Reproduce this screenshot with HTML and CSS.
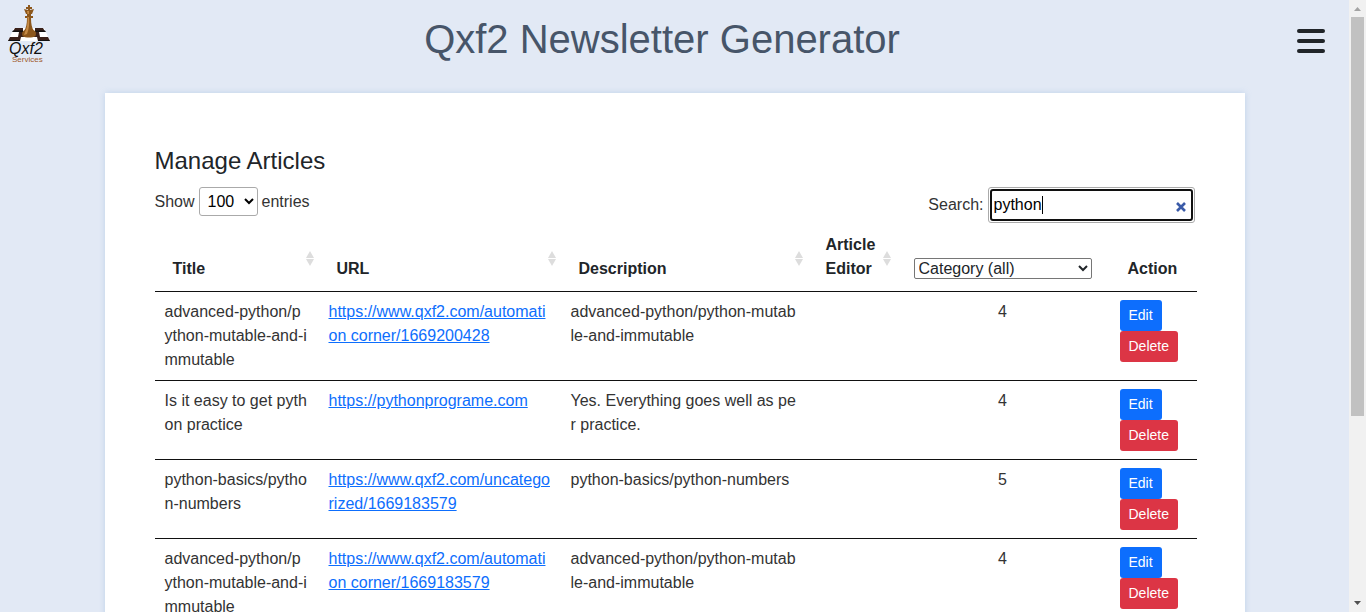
FILE: index.html
```html
<!DOCTYPE html>
<html lang="en">
<head>
<meta charset="utf-8">
<title>Qxf2 Newsletter Generator</title>
<meta name="viewport" content="width=device-width, initial-scale=1">
<link rel="stylesheet" href="styles.css">
</head>
<body class="window">
<div class="page">
  <header class="topbar">
    <a class="logo" href="#" aria-label="Qxf2 Services">
      <svg viewBox="0 0 44 66" width="44" height="66" aria-hidden="true">
        <path d="M7 28H37L43 41H1z" fill="#fff"/>
        <path d="M8 28h8v3.500H6zM28 28h8l2 3.500H28zM12 32h20l1 5H11zM3 37h11l-1 4H1zM30 37h11l2 4H31z" fill="#3a211a"/>
        <path d="M6 30.500h10v1.500H5zM28 30.500h10l1 1.500H28zM2 40h11v1H1zM31 40h11l1 1H31z" fill="#111"/>
        <path d="M21 5h2v2h2v2h-2v1l4-1-2 5h-1v2h2v2h-2c0 6 1 10 2.500 12 2.500 1 3 3 2 6-3 2-10 2-13 0-1-3 0-5 2-6 1.500-2 2.500-6 2.500-12h-2v-2h2v-2h-1l-2-5 4 1V9h-2V7h2z" fill="#8c571c"/>
        <path d="M20.500 17c.5 6-.5 11-2.500 15l-1 3 3-1c2-5 2.500-10 2-17zM20 11h2v3h-1.500z" fill="#c58a45"/>
        <text class="logo-name" x="2" y="54">Qxf2</text>
        <text class="logo-sub" x="5" y="62">Services</text>
      </svg>
    </a>
    <h1 class="title">Qxf2 Newsletter Generator</h1>
    <button class="menu" type="button" aria-label="Menu">
      <span class="menu-bar"></span><span class="menu-bar"></span><span class="menu-bar"></span>
    </button>
  </header>
  <main class="card">
    <h2 class="heading">Manage Articles</h2>
    <div class="controls">
      <label class="length">Show
        <select class="length-select"><option>100</option></select>
        entries</label>
      <div class="search">
        <label for="q">Search:</label>
        <div class="search-box">
          <input class="search-input" id="q" type="text" value="python">
          <span class="caret"></span>
          <button class="clear" type="button" aria-label="Clear search">
            <svg viewBox="0 0 10 10" width="10" height="10"><path d="M1 1l8 8M9 1L1 9" stroke="#3a5ba8" stroke-width="2.600"/></svg>
          </button>
        </div>
      </div>
    </div>
    <table class="articles">
      <colgroup><col class="c-title"><col class="c-url"><col class="c-desc"><col class="c-editor"><col class="c-cat"><col class="c-action"></colgroup>
      <thead>
        <tr>
          <th class="sortable">Title</th>
          <th class="sortable">URL</th>
          <th class="sortable">Description</th>
          <th class="sortable">Article Editor</th>
          <th><select class="category" aria-label="Category"><option>Category (all)</option></select></th>
          <th>Action</th>
        </tr>
      </thead>
      <tbody>
        <tr>
          <td>advanced-python/python-mutable-and-immutable</td>
          <td><a href="#">https://www.qxf2.com/automation corner/1669200428</a></td>
          <td>advanced-python/python-mutable-and-immutable</td>
          <td></td><td class="num">4</td>
          <td><div class="actions"><button class="btn edit" type="button">Edit</button><button class="btn delete" type="button">Delete</button></div></td>
        </tr>
        <tr>
          <td>Is it easy to get python practice</td>
          <td><a href="#">https://pythonprograme.com</a></td>
          <td>Yes. Everything goes well as per practice.</td>
          <td></td><td class="num">4</td>
          <td><div class="actions"><button class="btn edit" type="button">Edit</button><button class="btn delete" type="button">Delete</button></div></td>
        </tr>
        <tr>
          <td>python-basics/python-numbers</td>
          <td><a href="#">https://www.qxf2.com/uncategorized/1669183579</a></td>
          <td>python-basics/python-numbers</td>
          <td></td><td class="num">5</td>
          <td><div class="actions"><button class="btn edit" type="button">Edit</button><button class="btn delete" type="button">Delete</button></div></td>
        </tr>
        <tr>
          <td>advanced-python/python-mutable-and-immutable</td>
          <td><a href="#">https://www.qxf2.com/automation corner/1669183579</a></td>
          <td>advanced-python/python-mutable-and-immutable</td>
          <td></td><td class="num">4</td>
          <td><div class="actions"><button class="btn edit" type="button">Edit</button><button class="btn delete" type="button">Delete</button></div></td>
        </tr>
      </tbody>
    </table>
  </main>
</div>
<div class="scrollbar" aria-hidden="true">
  <svg class="arrow" viewBox="0 0 17 17"><path d="M5 11h7L8.500 7z" fill="#a3a3a3"/></svg>
  <div class="track"><div class="thumb"></div></div>
  <svg class="arrow" viewBox="0 0 17 17"><path d="M5 6h7L8.500 10z" fill="#505050"/></svg>
</div>
</body>
</html>
```
FILE: styles.css
```css
*, *::before, *::after { box-sizing: border-box; }

.window {
  margin: 0;
  height: 100vh;
  display: flex;
  overflow: hidden;
  background: #e2e9f5;
  color: #212529;
  font: 16px/24px "Liberation Sans", Arial, sans-serif;
}
.page { flex: 1; min-width: 0; overflow: hidden; }

.topbar {
  display: flex;
  align-items: flex-start;
  justify-content: space-between;
  padding: 0 24px 0 7px;
  height: 93px;
}
.logo { display: block; }
.logo svg { display: block; }
.logo-name { font: italic 16px "Liberation Sans", sans-serif; fill: #111; }
.logo-sub { font: 8px "Liberation Sans", sans-serif; fill: #a05a2c; }
.title {
  margin: 15px 0 0;
  padding-right: 24px;
  font-size: 40px;
  line-height: 48px;
  font-weight: 400;
  color: #475569;
}
.menu {
  display: flex;
  flex-direction: column;
  gap: 6px;
  margin-top: 29px;
  padding: 0;
  border: 0;
  background: none;
}
.menu-bar { width: 28px; height: 4px; border-radius: 2px; background: #212529; }

.card {
  max-width: 1140px;
  margin: 0 auto;
  padding: 50px 48px 50px 50px;
  background: #fff;
  box-shadow: 0 0 6px rgba(140, 180, 220, 0.4);
}
.heading { margin: 3px 0 12px; font-size: 24px; line-height: 29px; font-weight: 400; }

.controls {
  display: flex;
  justify-content: space-between;
  align-items: flex-start;
  padding-right: 2px;
  color: #333;
}
.length { display: flex; align-items: center; gap: 4px; }
.length-select {
  width: 59px;
  height: 29px;
  padding: 4px;
  border: 1px solid #aaa;
  border-radius: 3px;
  background: #fff;
  color: #000;
  font: inherit;
  line-height: 19px;
}
.search { display: flex; align-items: center; gap: 4px; }
.search-box {
  position: relative;
  padding: 1px;
  border: 1px solid #aaa;
  border-radius: 3px;
  background: #fff;
}
.search-input {
  display: block;
  width: 203px;
  height: 32px;
  padding: 0 24px 0 2px;
  border: 2px solid #101010;
  border-radius: 3px;
  outline: 0;
  color: #000;
  font: inherit;
}
.caret { position: absolute; left: 53px; top: 8px; width: 1px; height: 18px; background: #000; }
.clear {
  position: absolute;
  right: 8px;
  top: 14px;
  padding: 0;
  border: 0;
  background: none;
  line-height: 0;
}

.articles { width: 100%; table-layout: fixed; border-collapse: separate; border-spacing: 0; }
.c-title { width: 164px; }
.c-url { width: 242px; }
.c-desc { width: 247px; }
.c-editor { width: 88px; }
.c-cat { width: 214px; }
.c-action { width: 87px; }
.articles th {
  padding: 10px 18px;
  border-bottom: 1px solid #111;
  vertical-align: bottom;
  text-align: left;
  position: relative;
}
.articles th:last-child { padding-right: 0; }
.sortable::before, .sortable::after {
  content: "";
  position: absolute;
  right: 5px;
  border: 4px solid transparent;
}
.sortable::before { top: 28px; border-bottom: 7px solid #ddd; border-top: 0; }
.sortable::after { top: 36px; border-top: 7px solid #ddd; border-bottom: 0; }
.category {
  display: block;
  width: 100%;
  height: 21px;
  margin-bottom: 2px;
  border: 1px solid #767676;
  border-radius: 2px;
  background: #fff;
  color: #212529;
  font: inherit;
  font-weight: 400;
  line-height: 19px;
}
.articles td {
  padding: 8px 10px;
  border-bottom: 1px solid #111;
  vertical-align: top;
  word-break: break-all;
  color: #333;
}
.articles a { color: #0d6efd; }
.articles .num { text-align: center; }
.actions { display: flex; flex-direction: column; align-items: flex-start; }
.btn {
  height: 31px;
  padding: 4px 9px;
  border: 0;
  border-radius: 3px;
  color: #fff;
  font: 14px/21px "Liberation Sans", Arial, sans-serif;
}
.edit { background: #0d6efd; }
.delete { background: #dc3545; }

.scrollbar { width: 17px; display: flex; flex-direction: column; background: #f1f1f1; }
.arrow { display: block; width: 17px; height: 17px; }
.track { flex: 1; padding: 0 2px; }
.thumb { height: 69%; background: #c1c1c1; }
```
